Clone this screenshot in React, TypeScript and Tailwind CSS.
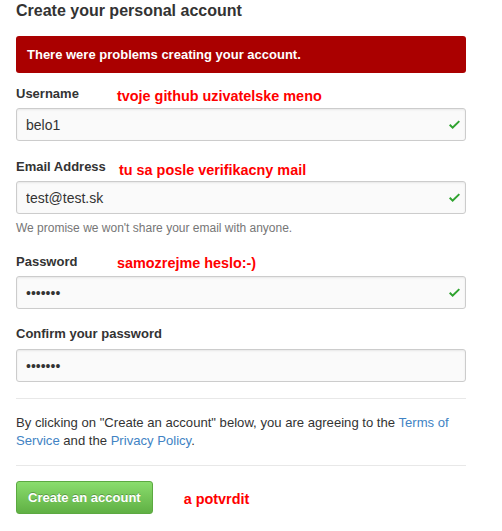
import React from "react";

const Check = () => (
	<svg
		width="11"
		height="15"
		viewBox="0 0 12 16"
		className="absolute right-[6px] top-[9px] fill-[#2fa32f]"
	>
		<path d="M12 5l-8 8-4-4 1.5-1.5L4 10l6.5-6.5L12 5z" />
	</svg>
);

const Field = ({
	label,
	note,
	noteClass = "",
	value,
	type = "text",
	valid = false,
}: {
	label: string;
	note?: string;
	noteClass?: string;
	value: string;
	type?: string;
	valid?: boolean;
}) => (
	<div>
		<div className="flex h-[18px] items-baseline">
			<label className="min-w-[101px] whitespace-nowrap text-[13px] font-bold leading-[18px] text-[#333]">
				{label}
			</label>
			{note && (
				<span
					className={`relative text-[14.4px] font-bold leading-[18px] text-[#ff0000] ${noteClass}`}
				>
					{note}
				</span>
			)}
		</div>
		<div className="relative mt-[6px]">
			<input
				type={type}
				defaultValue={value}
				readOnly
				className="block h-[33px] w-full rounded-[3px] border border-[#cccccc] bg-[#fafafa] px-[9px] text-[14px] text-[#333] shadow-[inset_0_1px_2px_rgba(0,0,0,0.075)] outline-none"
			/>
			{valid && <Check />}
		</div>
	</div>
);

export default function App() {
	return (
		<div className="min-h-[531px] bg-white font-['Liberation_Sans',Arial,sans-serif] text-[#333]">
			<div className="ml-4 w-[450px]">
				<h1 className="text-[16px] font-bold leading-[22px] text-[#333]">
					Create your personal account
				</h1>
				<div className="mt-[14px] rounded-[3px] bg-[#aa0000] px-[11px] py-[11px] text-[13px] font-bold leading-[15px] text-white">
					There were problems creating your account.
				</div>

				<div className="mt-[11px]">
					<Field
						label="Username"
						note="tvoje github uzivatelske meno"
						noteClass="top-[3px]"
						value="belo1"
						valid
					/>
				</div>

				<div className="mt-[16px]">
					<Field
						label="Email Address"
						note="tu sa posle verifikacny mail"
						noteClass="top-[4px] ml-[2px]"
						value="test@test.sk"
						valid
					/>
					<p className="mt-[6px] text-[12px] leading-[17px] text-[#767676]">
						We promise we won't share your email with anyone.
					</p>
				</div>

				<div className="mt-[15px]">
					<Field
						label="Password"
						note="samozrejme heslo:-)"
						noteClass="top-[2px]"
						value="1234567"
						type="password"
						valid
					/>
				</div>

				<div className="mt-[16px]">
					<Field
						label="Confirm your password"
						value="1234567"
						type="password"
					/>
				</div>

				<hr className="mt-[16px] border-0 border-t border-[#e8e8e8]" />

				<p className="mt-[15px] text-[13.1px] leading-[18px] text-[#333]">
					By clicking on "Create an account" below, you are agreeing to the{" "}
					<a href="#" className="text-[#4183c4]">
						Terms of Service
					</a>{" "}
					and the{" "}
					<a href="#" className="text-[#4183c4]">
						Privacy Policy
					</a>
					.
				</p>

				<hr className="mt-[15px] border-0 border-t border-[#e8e8e8]" />

				<div className="mt-[15px] flex items-center">
					<button className="h-[33px] rounded-[3px] border border-[#5ca941] bg-linear-to-b from-[#8add6d] to-[#60b044] px-[11px] text-[13px] font-bold text-white [text-shadow:0_-1px_0_rgba(0,0,0,0.25)]">
						Create an account
					</button>
					<span className="relative top-[2px] ml-[31px] text-[14.4px] font-bold text-[#ff0000]">
						a potvrdit
					</span>
				</div>
			</div>
		</div>
	);
}
